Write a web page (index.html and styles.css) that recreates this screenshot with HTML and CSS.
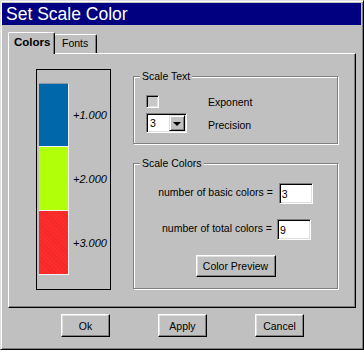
FILE: index.html
```html
<!DOCTYPE html>
<html lang="en">
<head>
    <meta charset="UTF-8">
    <title>Set Scale Color</title>
    <link rel="stylesheet" href="styles.css">
</head>
<body>

    <div class="window">
        <div class="titlebar">Set Scale Color</div>

        <!-- Tabs -->
        <div class="tabs">
            <div class="tab tab-active">Colors</div>
            <div class="tab">Fonts</div>
        </div>

        <div class="panel">
            <!-- Scale preview -->
            <div class="scale-frame">
                <div class="scale-row"><div class="swatch blue"></div><span class="scale-label">+1.000</span></div>
                <div class="scale-row"><div class="swatch green"></div><span class="scale-label">+2.000</span></div>
                <div class="scale-row"><div class="swatch red"></div><span class="scale-label">+3.000</span></div>
            </div>

            <div class="options">
                <div class="group">
                    <div class="group-title">Scale Text</div>
                    <div class="text-grid">
                        <input type="checkbox" class="checkbox">
                        <span class="grid-label">Exponent</span>
                        <div class="select">
                            <span class="select-value">3</span>
                            <span class="select-arrow"></span>
                        </div>
                        <span class="grid-label precision">Precision</span>
                    </div>
                </div>

                <div class="group group-colors">
                    <div class="group-title">Scale Colors</div>
                    <div class="color-rows">
                        <div class="field-row">
                            <span class="field-label">number of basic colors =</span>
                            <input type="text" class="field" value="3">
                        </div>
                        <div class="field-row gap-5">
                            <span class="field-label">number of total colors =</span>
                            <input type="text" class="field" value="9">
                        </div>
                        <button class="btn btn-preview">Color Preview</button>
                    </div>
                </div>
            </div>
        </div>

        <div class="buttons">
            <button class="btn btn-dialog">Ok</button>
            <button class="btn btn-dialog">Apply</button>
            <button class="btn btn-dialog">Cancel</button>
        </div>
    </div>

</body>
</html>
```

FILE: styles.css
```css
body {
    margin: 0;
    font-family: 'Liberation Sans', Arial, sans-serif;
    font-size: 10.5px;
    background-color: #c0c0c0;
    color: #000;
}

.window {
    width: 364px;
    height: 350px;
    box-sizing: border-box;
    border: 1px solid;
    border-color: #dfdfdf #000 #000 #dfdfdf;
    box-shadow: inset 1px 1px #fff, inset -1px -1px #808080;
    padding: 2px 2px 0 1px;
}

.titlebar {
    height: 22px;
    line-height: 22px;
    background-color: #000080;
    color: #fff;
    font-size: 17.5px;
    padding-left: 4px;
}

/* Tabs */
.tabs {
    display: flex;
    align-items: flex-end;
    height: 21px;
    margin-top: 7px;
    padding-left: 6px;
}

.tab {
    width: 42px;
    height: 19px;
    box-sizing: border-box;
    border-top: 1px solid #fff;
    border-right: 1px solid #000;
    border-top-right-radius: 2px;
    box-shadow: inset -1px 0 #808080;
    padding-left: 7px;
    line-height: 17px;
}

.tab-active {
    position: relative;
    z-index: 1;
    width: 47px;
    height: 22px;
    margin-bottom: -1px;
    border-left: 1px solid #fff;
    border-top-left-radius: 2px;
    padding-left: 5px;
    line-height: 19px;
    font-weight: bold;
    font-size: 11.5px;
    background-color: #c0c0c0;
}

.panel {
    display: flex;
    align-items: flex-start;
    width: 348px;
    height: 255px;
    box-sizing: border-box;
    margin-left: 6px;
    border: 1px solid;
    border-color: #fff #000 #000 #fff;
    box-shadow: inset -1px -1px #808080;
    padding: 15px 0 0 27px;
}

/* Scale preview */
.scale-frame {
    width: 75px;
    height: 221px;
    box-sizing: border-box;
    border: 1px solid #000;
    padding: 13px 0 0 2px;
}

.scale-row {
    display: flex;
    align-items: center;
    height: 64px;
}

.swatch {
    width: 30px;
    height: 64px;
    box-sizing: border-box;
    border-right: 1px solid #f2f2f2;
    border-bottom: 1px solid #f2f2f2;
}

.blue { background-color: #0068aa; border-top: 1px solid #8a9aa8; }
.green { background-color: #b2ff0a; }
.red {
    background-color: #ff2c2c;
    background-image: repeating-linear-gradient(45deg, rgba(0,0,0,0.06) 0 1px, transparent 1px 3px);
}

.scale-label {
    margin-left: 4px;
    font-style: italic;
    font-size: 11px;
}

/* Option groups */
.options {
    width: 205px;
    margin: 7px 0 0 22px;
}

.group {
    border: 1px solid #808080;
    box-shadow: inset 1px 1px #fff, 1px 1px #fff;
    padding-bottom: 10px;
}

.group-title {
    width: fit-content;
    margin: -7px 0 0 6px;
    padding: 0 2px;
    line-height: 13px;
    background-color: #c0c0c0;
}

.text-grid {
    display: grid;
    grid-template-columns: 62px auto;
    align-items: center;
    row-gap: 5px;
    margin-top: 12px;
    padding-left: 12px;
}

.checkbox {
    appearance: none;
    width: 13px;
    height: 13px;
    margin: 0;
    box-sizing: border-box;
    border: 1px solid;
    border-color: #808080 #fff #fff #808080;
    box-shadow: inset 1px 1px #000, inset -1px -1px #dfdfdf;
    background-color: #c8c8c8;
}

.precision { padding-top: 3px; }

.select {
    display: flex;
    align-items: center;
    width: 41px;
    height: 20px;
    box-sizing: border-box;
    border: 1px solid;
    border-color: #808080 #fff #fff #808080;
    box-shadow: inset 1px 1px #000, inset -1px -1px #dfdfdf;
    padding: 1px;
    background-color: #fff;
}

.select-value {
    flex: 1;
    padding-left: 2px;
}

.select-arrow {
    display: flex;
    justify-content: center;
    align-items: center;
    width: 16px;
    height: 16px;
    box-sizing: border-box;
    border: 1px solid;
    border-color: #dfdfdf #000 #000 #dfdfdf;
    box-shadow: inset 1px 1px #fff, inset -1px -1px #808080;
    background-color: #c0c0c0;
}

.select-arrow::after {
    content: '';
    border-left: 4px solid transparent;
    border-right: 4px solid transparent;
    border-top: 4px solid #000;
    margin-top: 1px;
}

.group-colors {
    margin-top: 19px;
    padding-bottom: 11px;
}

.color-rows {
    display: flex;
    flex-direction: column;
    align-items: center;
    gap: 15px;
    margin-top: 13px;
}

.field-row {
    display: flex;
    align-items: center;
    gap: 6px;
}

.field-row.gap-5 { gap: 5px; padding-left: 2px; }

.field-label { padding-bottom: 3px; }

.field {
    width: 34px;
    height: 21px;
    box-sizing: border-box;
    margin: 0;
    border: 1px solid;
    border-color: #808080 #fff #fff #808080;
    box-shadow: inset 1px 1px #000, inset -1px -1px #dfdfdf;
    padding: 0 2px;
    font-family: inherit;
    font-size: 10.5px;
    background-color: #fff;
    outline: none;
}

/* Buttons */
.btn {
    box-sizing: border-box;
    margin: 0;
    border: 1px solid;
    border-color: #fff #000 #000 #fff;
    box-shadow: inset -1px -1px #808080, inset 1px 1px #dfdfdf;
    background-color: #c0c0c0;
    font-family: inherit;
    font-size: 10.5px;
    color: #000;
    padding: 0;
}

.btn-preview {
    width: 80px;
    height: 22px;
}

.buttons {
    display: flex;
    gap: 48px;
    margin-top: 6px;
    padding-left: 59px;
}

.btn-dialog {
    width: 49px;
    height: 23px;
}
```
